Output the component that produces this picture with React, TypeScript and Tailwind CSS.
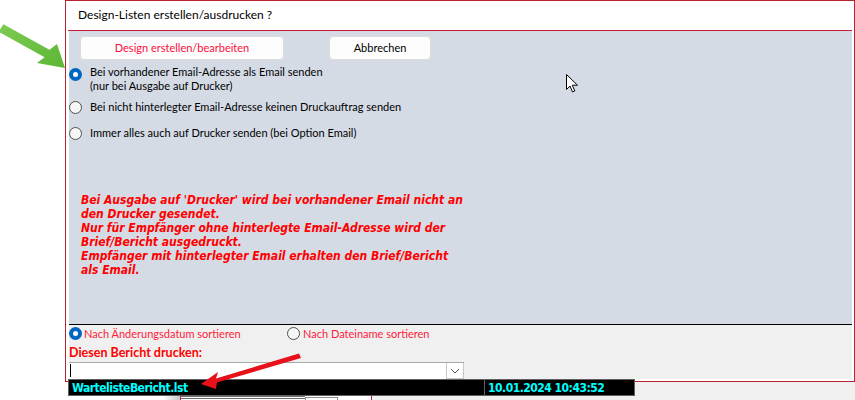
import React from "react";

function Radio({ checked }: { checked?: boolean }) {
  return checked ? (
    <span className="w-[13px] h-[13px] rounded-full bg-[#0067c0] flex items-center justify-center shrink-0">
      <span className="w-[5px] h-[5px] rounded-full bg-white" />
    </span>
  ) : (
    <span className="w-[13px] h-[13px] rounded-full border border-[#4f4f4f] bg-[#f6f6f6] shrink-0" />
  );
}

export default function App() {
  return (
    <div className="w-[855px] h-[400px] bg-white relative overflow-hidden flex flex-col font-['Lato',sans-serif] text-[11px] text-black">
      {/* top row */}
      <div className="h-[382px] flex shrink-0">
        <div className="w-[65px] shrink-0 bg-white" />
        {/* dialog */}
        <div className="w-[790px] h-[382px] border border-[#b8232f] bg-white pl-[3px] pr-[2px] pb-[3px] flex flex-col">
          <div className="h-[30px] shrink-0 border-b border-[#c8202e] flex items-center pl-[10px] pb-[1px] -ml-[1px] text-[12px]">
            <span className="leading-[14px]">Design-Listen erstellen/ausdrucken ?</span>
          </div>
          {/* blue content */}
          <div className="h-[294px] shrink-0 bg-[#d5dbe5] border-b border-black flex flex-col pt-[5px]">
            <div className="flex pl-[11px]">
              <div className="w-[204px] h-[24px] bg-[#fdfdfd] border border-[#dcdcdc] rounded-[4px] flex items-center justify-center text-[#ff0a3c]">
                Design erstellen/bearbeiten
              </div>
              <div className="ml-[45px] w-[102px] h-[24px] bg-[#fdfdfd] border border-[#dcdcdc] rounded-[4px] flex items-center justify-center">
                Abbrechen
              </div>
            </div>
            <div className="flex mt-[5px] leading-[14px]">
              <span className="mt-[3px]">
                <Radio checked />
              </span>
              <div className="ml-[8px]">
                <div>Bei vorhandener Email-Adresse als Email senden</div>
                <div>(nur bei Ausgabe auf Drucker)</div>
              </div>
            </div>
            <div className="flex items-center h-[14px] mt-[7px] leading-[14px]">
              <Radio />
              <span className="ml-[8px]">Bei nicht hinterlegter Email-Adresse keinen Druckauftrag senden</span>
            </div>
            <div className="flex items-center h-[14px] mt-[12px] leading-[14px]">
              <Radio />
              <span className="ml-[8px]">Immer alles auch auf Drucker senden (bei Option Email)</span>
            </div>
            <div className="mt-[53px] pl-[12px] font-['DejaVu_Sans_Condensed','DejaVu_Sans',sans-serif] font-bold italic text-[12px] leading-[14px] text-[#ff0000]">
              <div>Bei Ausgabe auf 'Drucker' wird bei vorhandener Email nicht an</div>
              <div>den Drucker gesendet.</div>
              <div>Nur für Empfänger ohne hinterlegte Email-Adresse wird der</div>
              <div>Brief/Bericht ausgedruckt.</div>
              <div>Empfänger mit hinterlegter Email erhalten den Brief/Bericht</div>
              <div>als Email.</div>
            </div>
          </div>
          {/* grey area */}
          <div className="flex-1 bg-[#f0f0f0] flex flex-col pt-[2px]">
            <div className="flex items-center h-[13px] text-[#ff1a3a] leading-[14px]">
              <div className="w-[218px] flex items-center">
                <Radio checked />
                <span className="ml-[2px]">Nach Änderungsdatum sortieren</span>
              </div>
              <Radio />
              <span className="ml-[3px]">Nach Dateiname sortieren</span>
            </div>
            <div className="mt-[6px] h-[14px] leading-[14px] font-bold text-[12.5px] text-[#ff0000]">Diesen Bericht drucken:</div>
            <div className="mt-[2px] w-[395px] h-[17px] bg-white border-t border-[#a8a8a8] flex">
              <div className="flex-1 flex items-start pl-[1px] pt-[1px]">
                <span className="w-px h-[13px] bg-black" />
              </div>
              <div className="w-[18px] h-[16px] border border-[#c8c8c8] border-t-0 bg-white flex items-center justify-center">
                <svg width="10" height="6" viewBox="0 0 10 6">
                  <path d="M1 1 L5 5 L9 1" fill="none" stroke="#555" strokeWidth="1" />
                </svg>
              </div>
            </div>
          </div>
        </div>
      </div>
      {/* bottom strip */}
      <div className="flex-1 flex">
        <div className="w-[163px] bg-white" />
        <div className="w-[17px] bg-gradient-to-r from-white to-[#c8c8c8]" />
        <div className="w-px bg-[#b8232f]" />
        <div className="w-[124px] bg-white flex flex-col justify-end">
          <div className="h-[3px] border-t border-b border-[#707070] mb-[1px]" />
        </div>
        <div className="w-[33px] bg-white flex flex-col justify-end">
          <div className="h-[3px] border border-[#909090] border-b-0" />
        </div>
        <div className="w-[33px] bg-white" />
        <div className="w-px bg-[#b8232f]" />
        <div className="flex-1 bg-[#f0f0f0]" />
      </div>

      {/* status bar overlay */}
      <div className="absolute left-[68px] top-[379px] w-[567px] h-[17px] bg-black border border-[#606060] flex items-center font-['DejaVu_Sans_Condensed','DejaVu_Sans',sans-serif] font-bold text-[12px] tracking-[-0.5px] text-[#00ffff] leading-[14px]">
        <div className="w-[415px] h-full flex items-center pl-[3px]">WartelisteBericht.lst</div>
        <div className="h-full border-l border-[#606060] flex items-center pl-[3px]">10.01.2024 10:43:52</div>
      </div>

      {/* green arrow */}
      <svg className="absolute left-0 top-0" width="80" height="80" viewBox="0 0 80 80">
        <defs>
          <linearGradient id="ga" x1="0" y1="0" x2="1" y2="1">
            <stop offset="0" stopColor="#7ccc52" />
            <stop offset="1" stopColor="#5db535" />
          </linearGradient>
        </defs>
        <polygon points="3.4,24.2 49.4,49.7 57,44 65,68 37,63 44.6,57.3 -1.4,31.8" fill="url(#ga)" />
      </svg>

      {/* red arrow */}
      <svg className="absolute left-0 top-0 pointer-events-none" width="855" height="400" viewBox="0 0 855 400">
        <polygon points="201,384 218,372 216,378.5 299,353.5 301,358 217,382.5 216,389" fill="#e8101a" />
      </svg>

      {/* mouse cursor */}
      <svg className="absolute left-[566px] top-[74px]" width="13" height="20" viewBox="0 0 13 20">
        <path d="M0.5 0.5 L0.5 15.5 L4 12 L6.5 18 L8.8 17 L6.3 11.2 L11.5 11.2 Z" fill="#fff" stroke="#000" strokeWidth="1" strokeLinejoin="miter" />
      </svg>
    </div>
  );
}
